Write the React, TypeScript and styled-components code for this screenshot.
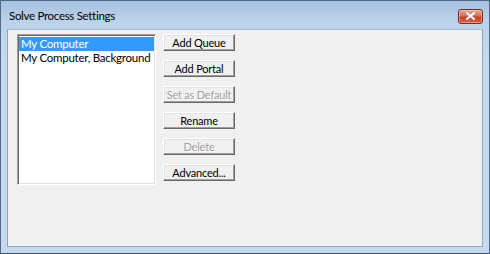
import { createGlobalStyle, styled } from "styled-components";

// ================= Global =================
const GlobalStyle = createGlobalStyle`
  html, body {
    margin: 0;
    padding: 0;
    background: #c4d8ee;
  }
  body {
    font-family: Lato, "Liberation Sans", sans-serif;
  }
`;

// ================= Window frame =================
const Window = styled.div`
  width: 490px;
  height: 254px;
  box-sizing: border-box;
  display: flex;
  flex-direction: column;
  border: 1px solid #4f6a8c;
  border-bottom-color: #3b4f66;
  background: linear-gradient(to bottom, #a6c0de 0px, #bcd2ea 20px, #c6daef 60px, #c6daef 100%);
  padding: 0 6px 6px 6px;
`;

const TitleBar = styled.div`
  height: 28px;
  flex: none;
  display: flex;
  align-items: center;
  justify-content: space-between;
  padding-left: 2px;
`;

const Title = styled.span`
  font-size: 11.5px;
  letter-spacing: -0.3px;
  color: #000;
  margin-top: 1px;
`;

const CloseButton = styled.div`
  width: 23px;
  height: 13px;
  margin-top: 2px;
  border: 1px solid #7a2a22;
  border-radius: 3px;
  background: linear-gradient(to bottom, #e9a593 0%, #d7705a 45%, #c1402a 55%, #d2644c 100%);
  box-shadow: inset 0 0 0 1px rgba(255, 210, 200, 0.5);
  display: flex;
  align-items: center;
  justify-content: center;
`;

// ================= Client area =================
const Client = styled.div`
  flex: 1;
  background: #f0f0f0;
  border: 1px solid #8fa6c0;
  border-top-color: #a9bcd2;
  display: flex;
  gap: 7px;
  padding: 4px 0 0 9px;
`;

const ListBox = styled.div`
  width: 139px;
  height: 151px;
  box-sizing: border-box;
  background: #fff;
  border-top: 1px solid #a0a0a0;
  border-left: 1px solid #a0a0a0;
  border-right: 1px solid #fff;
  border-bottom: 1px solid #fff;
  box-shadow: inset 1px 1px 0 #696969, inset -1px -1px 0 #e3e3e3;
  padding: 2px 1px;
  display: flex;
  flex-direction: column;
  overflow: hidden;
`;

const ListItem = styled.div<{ $selected?: boolean }>`
  height: 14px;
  line-height: 14px;
  font-size: 11.5px;
  letter-spacing: -0.25px;
  padding-left: 2px;
  white-space: nowrap;
  color: ${(p) => (p.$selected ? "#fff" : "#000")};
  background: ${(p) => (p.$selected ? "#3399ff" : "transparent")};
`;

const ButtonColumn = styled.div`
  display: flex;
  flex-direction: column;
  gap: 9px;
`;

const Button = styled.div<{ $disabled?: boolean }>`
  width: 72px;
  height: 17px;
  box-sizing: border-box;
  background: #f0f0f0;
  border-top: 1px solid #fff;
  border-left: 1px solid #fff;
  border-right: 1px solid #696969;
  border-bottom: 1px solid #696969;
  box-shadow: inset -1px -1px 0 #a0a0a0, inset 1px 1px 0 #e3e3e3;
  display: flex;
  align-items: center;
  justify-content: center;
  white-space: nowrap;
  font-size: 11px;
  letter-spacing: -0.2px;
  color: ${(p) => (p.$disabled ? "#a0a0a0" : "#000")};
  text-shadow: ${(p) => (p.$disabled ? "1px 1px 0 #fff" : "none")};
`;

const items = ["My Computer", "My Computer, Background"];
const buttons = [
  { label: "Add Queue" },
  { label: "Add Portal" },
  { label: "Set as Default", disabled: true },
  { label: "Rename" },
  { label: "Delete", disabled: true },
  { label: "Advanced..." },
];

export default function App() {
  return (
    <>
      <GlobalStyle />
      <Window>
        <TitleBar>
          <Title>Solve Process Settings</Title>
          <CloseButton>
            <svg width="9" height="8" viewBox="0 0 9 8">
              <path d="M1 1 L8 7 M8 1 L1 7" stroke="#fff" strokeWidth="2" strokeLinecap="square" />
            </svg>
          </CloseButton>
        </TitleBar>
        <Client>
          <ListBox>
            {items.map((it, i) => (
              <ListItem key={it} $selected={i === 0}>
                {it}
              </ListItem>
            ))}
          </ListBox>
          <ButtonColumn>
            {buttons.map((b) => (
              <Button key={b.label} $disabled={b.disabled}>
                {b.label}
              </Button>
            ))}
          </ButtonColumn>
        </Client>
      </Window>
    </>
  );
}
